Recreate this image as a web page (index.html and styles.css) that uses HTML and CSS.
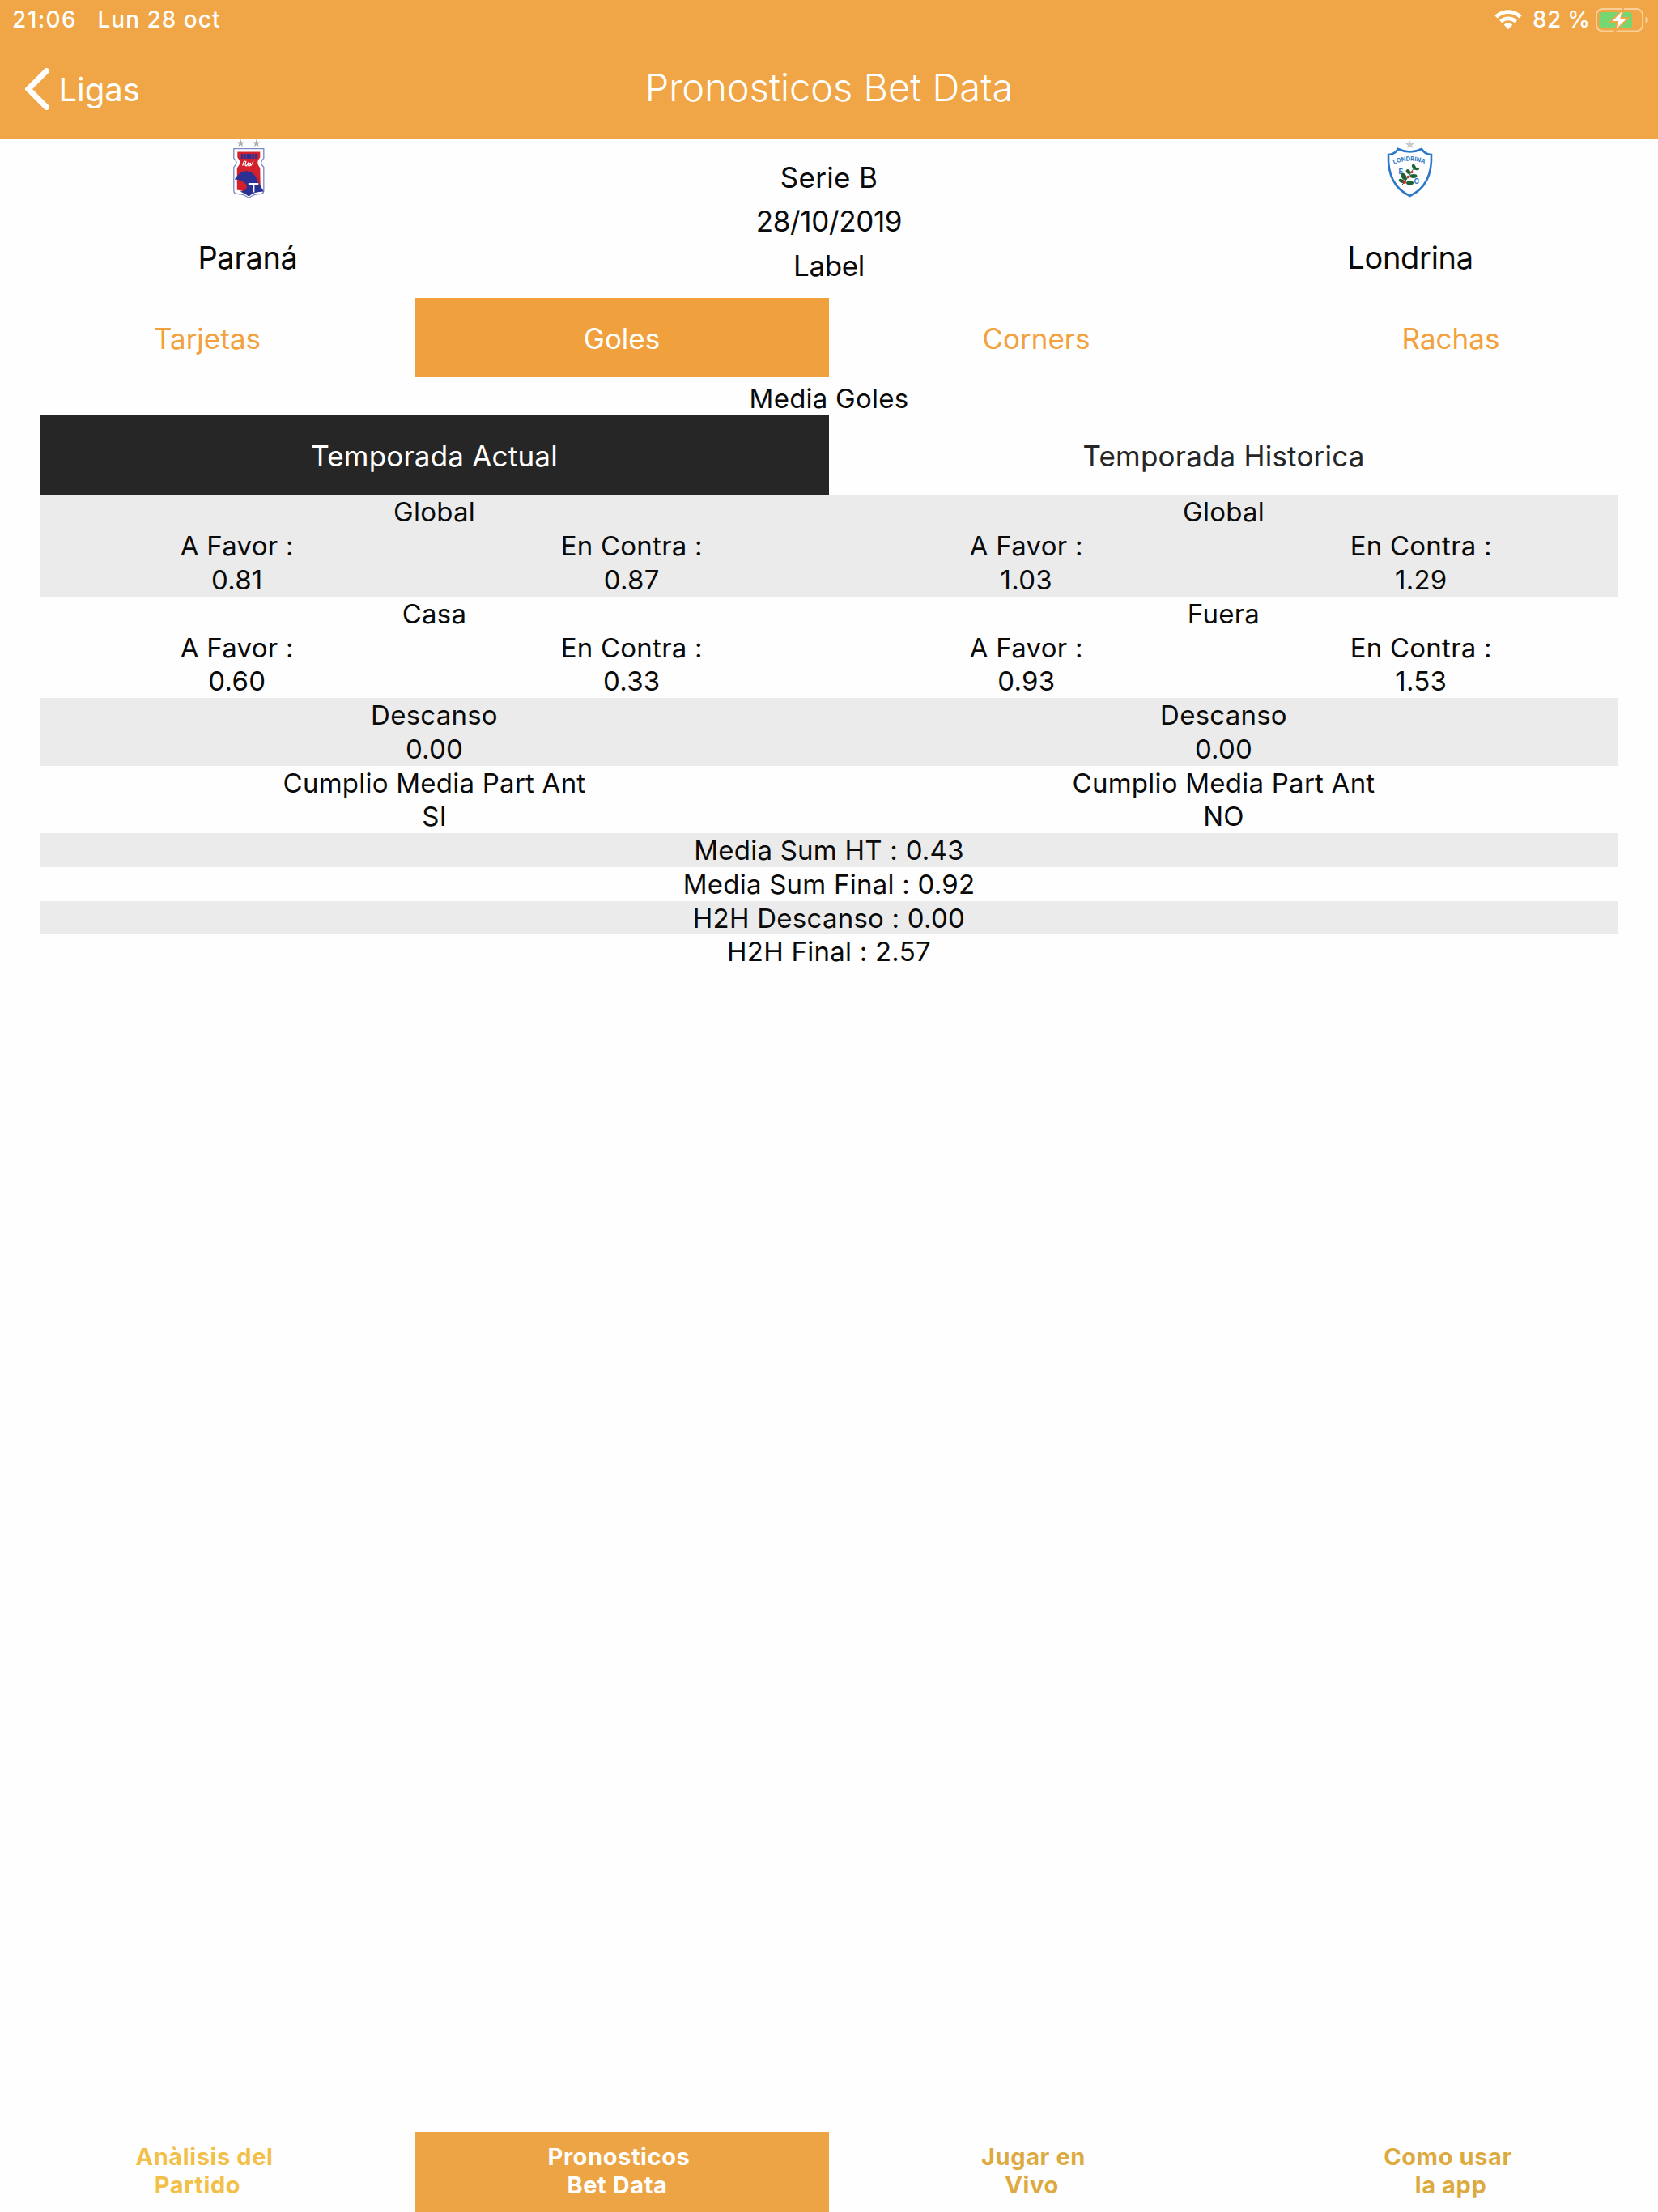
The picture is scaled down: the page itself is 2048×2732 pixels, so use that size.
FILE: index.html
```html
<!DOCTYPE html>
<html lang="es">
<head>
<meta charset="utf-8">
<title>Pronosticos Bet Data</title>
<link rel="stylesheet" href="styles.css">
</head>
<body>
<div class="app">
  <header class="top">
    <div class="status">
      <span class="clock">21:06</span>
      <span class="day">Lun 28 oct</span>
      <svg class="wifi" viewBox="0 0 34 25">
        <path d="M0.3 7.2C9.5-2 24.500-2 33.700 7.200L30.400 10.500C23 3.200 11 3.200 3.600 10.500Z"/>
        <path d="M6 12.900C12 7 22 7 28 12.900L24.700 16.200C20.500 12.200 13.500 12.200 9.300 16.200Z"/>
        <path d="M11.600 18.600C14.500 15.900 19.500 15.900 22.400 18.600L17 24.200Z"/>
      </svg>
      <span class="charge">82 %</span>
      <svg class="battery" viewBox="0 0 66 30">
        <rect x="1" y="1" width="57" height="27.500" rx="7.500" fill="none" stroke="#f8cf98" stroke-width="2"/>
        <path d="M61.500 10.500C66 12 66 17.500 61.500 19Z" fill="#f8cf98"/>
        <rect x="4.500" y="5" width="40.500" height="19.500" rx="3" fill="#76d672"/>
        <path d="M34 1L18.500 17H27L23.500 29L40.500 12H31.500Z" fill="#fff" stroke="#f0a646" stroke-width="2"/>
      </svg>
    </div>
    <nav class="bar">
      <a class="back">
        <svg class="chevron" viewBox="0 0 30 52"><path d="M26.500 3.500L4 26L26.500 48.500"/></svg>
        <span class="back-text">Ligas</span>
      </a>
      <h1 class="title">Pronosticos Bet Data</h1>
    </nav>
  </header>

  <section class="match">
    <div class="team">
      <svg class="crest" viewBox="269.200 172.400 75 75">
        <g fill="#a3a9a9">
          <path d="M297.500 172.500L298.600 176H302L299.300 178.100L300.300 181.500L297.500 179.400L294.700 181.500L295.700 178.100L293 176H296.400Z"/>
          <path d="M317 172.500L318.100 176H321.500L318.800 178.100L319.800 181.500L317 179.400L314.200 181.500L315.200 178.100L312.500 176H315.900Z"/>
        </g>
        <path d="M289 184H326V196Q319.500 201 326 207V236Q326 240 321 240Q313 240 307.500 245Q302 240 294 240Q289 240 289 236V207Q295.500 201 289 196Z" fill="#fff" stroke="#7f86c4" stroke-width="1.300"/>
        <path d="M293.500 188H321.500V195Q315.500 201 321.500 208L322 235Q313 236 307.500 240Q302 236 293 235V208Q299.500 201 293.500 195Z" fill="#d3202c"/>
        <path d="M290 222Q295 213 304 211.500Q315 212 318.500 224L326 237Q314 237 307.500 243Q302 239 297 237Q306 236 305 229Q300 222 290 222Z" fill="#2b3192"/>
        <path d="M307 227.500H319.500M313.500 228V238" stroke="#fff" stroke-width="2.200" fill="none"/>
        <path d="M298 193.500H317.500" stroke="#2b3192" stroke-width="6" stroke-dasharray="2.600 0.800"/>
        <path d="M300 205Q301 198 304 200Q302 206 305 205Q308 198 307 204Q311 199 309 205Q312 204 313 199" fill="none" stroke="#fff" stroke-width="1.300"/>
      </svg>
      <span class="name">Paraná</span>
    </div>
    <div class="info">
      <span class="league">Serie B</span>
      <span class="date">28/10/2019</span>
      <span class="label">Label</span>
    </div>
    <div class="team">
      <svg class="crest" viewBox="1704.500 172 75 75">
        <path d="M1741 173L1742.500 177H1746.500L1743.500 179.500L1744.500 183L1741 181L1737.500 183L1738.500 179.500L1735.500 177H1739.500Z" fill="#c8cacb"/>
        <path d="M1726.500 184Q1741 191 1755.500 184Q1760 191 1767.500 191Q1769 229 1741 242Q1713 229 1714.500 191Q1722 191 1726.500 184Z" fill="#fff" stroke="#2b78c8" stroke-width="2.600"/>
        <path id="arc" d="M1721.500 203Q1741 194 1761 203" fill="none"/>
        <text class="crest-name"><textPath href="#arc" textLength="39" lengthAdjust="spacingAndGlyphs">LONDRINA</textPath></text>
        <text class="crest-letter" x="1727" y="215">E</text>
        <text class="crest-letter" x="1746" y="227">C</text>
        <path d="M1731 229Q1740 218 1747 206" stroke="#28633a" fill="none"/>
        <g fill="#1d6336">
          <ellipse cx="1733.500" cy="218" rx="5.200" ry="3" transform="rotate(55 1733.500 218)"/>
          <ellipse cx="1731" cy="223.500" rx="4" ry="2.300" transform="rotate(25 1731 223.500)"/>
          <ellipse cx="1741" cy="226" rx="4.500" ry="2.400"/>
          <ellipse cx="1739" cy="212" rx="3.200" ry="2.300" transform="rotate(45 1739 212)"/>
          <ellipse cx="1745.500" cy="217.500" rx="4.500" ry="2.400"/>
          <ellipse cx="1746" cy="206" rx="3.600" ry="2.100" transform="rotate(60 1746 206)"/>
          <ellipse cx="1749.500" cy="208.500" rx="3" ry="1.700"/>
        </g>
        <g fill="#e2242a"><circle cx="1734.500" cy="225" r="2"/><circle cx="1739" cy="218.500" r="1.800"/><circle cx="1743.500" cy="212.500" r="1.600"/></g>
      </svg>
      <span class="name">Londrina</span>
    </div>
  </section>

  <nav class="tabs">
    <a class="tab">Tarjetas</a>
    <a class="tab active">Goles</a>
    <a class="tab">Corners</a>
    <a class="tab">Rachas</a>
  </nav>

  <main class="stats">
    <h2 class="heading">Media Goles</h2>
    <div class="seasons">
      <a class="season selected">Temporada Actual</a>
      <a class="season">Temporada Historica</a>
    </div>
    <div class="group shaded">
      <div class="row"><span>Global</span><span>Global</span></div>
      <div class="row"><span>A Favor :</span><span>En Contra :</span><span>A Favor :</span><span>En Contra :</span></div>
      <div class="row"><span>0.81</span><span>0.87</span><span>1.03</span><span>1.29</span></div>
    </div>
    <div class="group">
      <div class="row"><span>Casa</span><span>Fuera</span></div>
      <div class="row"><span>A Favor :</span><span>En Contra :</span><span>A Favor :</span><span>En Contra :</span></div>
      <div class="row"><span>0.60</span><span>0.33</span><span>0.93</span><span>1.53</span></div>
    </div>
    <div class="group shaded">
      <div class="row"><span>Descanso</span><span>Descanso</span></div>
      <div class="row"><span>0.00</span><span>0.00</span></div>
    </div>
    <div class="group">
      <div class="row"><span>Cumplio Media Part Ant</span><span>Cumplio Media Part Ant</span></div>
      <div class="row"><span>SI</span><span>NO</span></div>
    </div>
    <div class="group shaded"><div class="row"><span>Media Sum HT : 0.43</span></div></div>
    <div class="group"><div class="row"><span>Media Sum Final : 0.92</span></div></div>
    <div class="group shaded"><div class="row"><span>H2H Descanso : 0.00</span></div></div>
    <div class="group"><div class="row"><span>H2H Final : 2.57</span></div></div>
  </main>

  <footer class="foot">
    <a class="link analysis"><span>Anàlisis del</span><span class="second">Partido</span></a>
    <a class="link current"><span>Pronosticos</span><span class="second">Bet Data</span></a>
    <a class="link live"><span>Jugar en</span><span class="second">Vivo</span></a>
    <a class="link help"><span>Como usar</span><span class="second">la app</span></a>
  </footer>
</div>
</body>
</html>
```
FILE: styles.css
```css
* { box-sizing: border-box; }
body { margin: 0; background: #fefefe; color: #0a0a0a; font-family: Inter, "Liberation Sans", sans-serif; font-size: 33px; }
.app { width: 2048px; height: 2732px; display: flex; flex-direction: column; overflow: hidden; }
svg { display: block; flex: none; }

.top { height: 171.600px; flex: none; background: #f0a646; color: #fff; }
.status { height: 49px; display: flex; align-items: center; padding: 0 11px 0 15px; font-size: 28px; font-weight: 500; line-height: 49px; }
.clock { width: 105.500px; letter-spacing: 1.400px; }
.day { letter-spacing: 1px; }
.wifi { width: 34px; height: 25px; margin-left: auto; margin-right: 13px; fill: #fff; }
.charge { width: 78px; letter-spacing: 0.300px; white-space: nowrap; }
.battery { width: 66px; height: 30px; }
.bar { height: 122px; display: grid; grid-template-columns: 1fr auto 1fr; align-items: center; padding: 0 31px; }
.back { display: flex; align-items: center; gap: 11.500px; font-size: 40px; line-height: 60px; }
.back-text { padding-top: 2px; }
.chevron { width: 30px; height: 52px; }
.chevron path { fill: none; stroke: #fff; stroke-width: 7; stroke-linecap: round; stroke-linejoin: miter; }
.title { margin: 0; padding-bottom: 4px; font-size: 47px; font-weight: 300; line-height: 60px; letter-spacing: 0; }

.match { height: 196.700px; flex: none; display: grid; grid-template-columns: 612px 1fr 612px; }
.team { display: flex; flex-direction: column; align-items: center; }
.crest { width: 75px; height: 75px; }
.name { margin-top: 46px; font-size: 38px; line-height: 50px; letter-spacing: -0.300px; }
.crest-name { font-size: 7.500px; font-weight: 700; fill: #2b78c8; }
.crest-letter { font-size: 9px; font-weight: 700; fill: #2b78c8; }
.info { display: flex; flex-direction: column; align-items: center; padding-top: 20px; font-size: 35px; line-height: 54.500px; }
.league { letter-spacing: 0.300px; }
.date, .label { letter-spacing: -0.350px; }

.tabs { height: 98px; flex: none; display: grid; grid-template-columns: repeat(4, 1fr); font-size: 35px; color: #f2a13c; }
.tab { display: flex; align-items: center; justify-content: center; padding-top: 1px; }
.tab.active { background: #f0a13e; color: #fff; }

.stats { padding: 0 49px; display: flex; flex-direction: column; letter-spacing: 0.240px; }
.heading { margin: 0; height: 47.200px; font-size: 33px; font-weight: 400; line-height: 52px; text-align: center; }
.seasons { height: 98px; display: grid; grid-template-columns: 1fr 1fr; font-size: 35px; letter-spacing: 0.200px; color: #262626; }
.season { display: flex; align-items: center; justify-content: center; padding-top: 1px; }
.season.selected { background: #262626; color: #fff; }
.group.shaded { background: #ebebeb; }
.row { display: grid; grid-auto-flow: column; grid-auto-columns: 1fr; height: 41.780px; line-height: 42px; text-align: center; }

.foot { height: 99.300px; flex: none; margin-top: auto; display: grid; grid-template-columns: repeat(4, 1fr); font-size: 29px; font-weight: 650; line-height: 34.300px; letter-spacing: 0.600px; }
.link { display: flex; flex-direction: column; align-items: center; padding-top: 14.500px; padding-right: 7px; }
.second { padding-right: 4px; }
.analysis { color: #f2bf49; }
.analysis .second { padding-right: 17px; }
.current { background: #eda445; color: #fff; }
.live, .help { color: #dcaa3e; }
.help .second { padding-right: 0; padding-left: 7px; }
```
